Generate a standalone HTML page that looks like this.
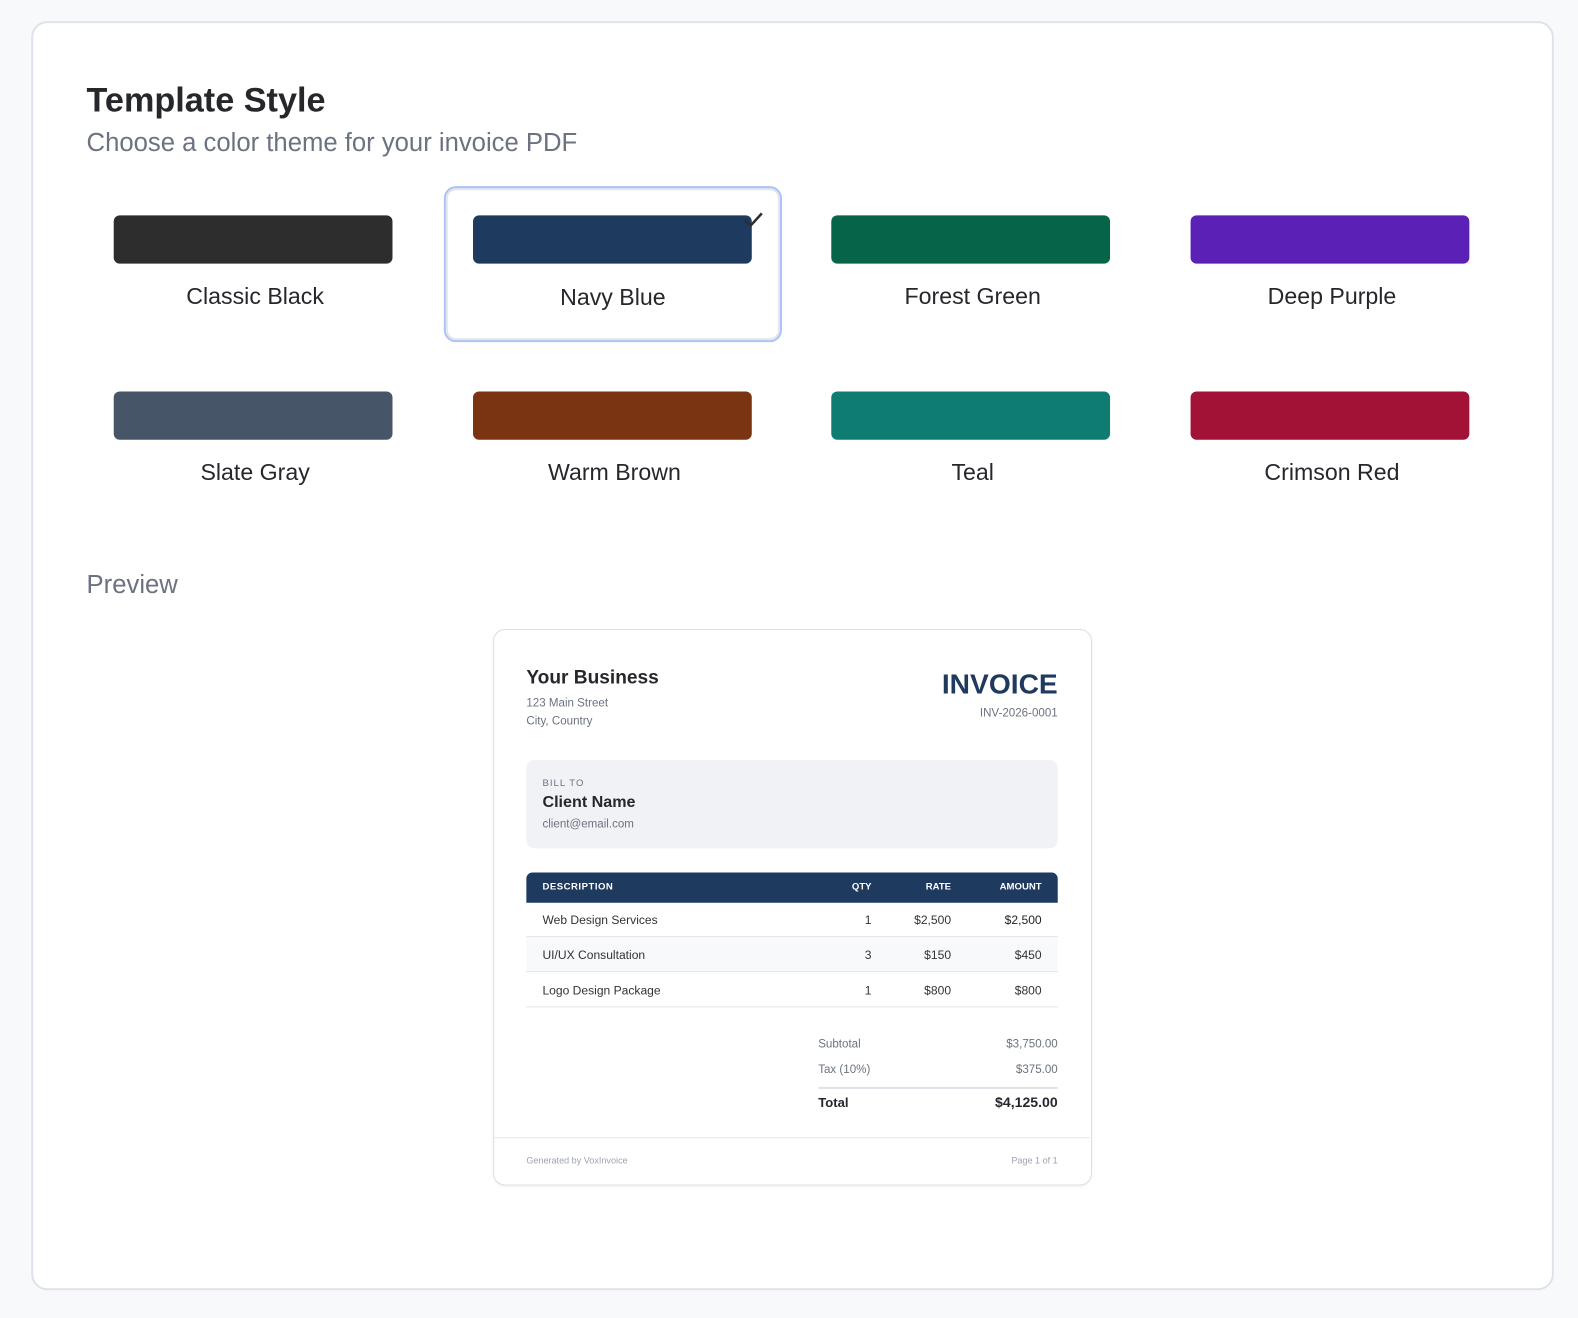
<!DOCTYPE html>
<html><head><meta charset="utf-8"><style>
*{box-sizing:border-box;margin:0;padding:0}
body{width:1578px;height:1318px;background:#f8f9fb;font-family:"Liberation Sans",sans-serif;color:#25272b;position:relative;overflow:hidden}
#w{position:absolute;left:0;top:0;width:1578px;height:1310px;transform:scale(1.0064);transform-origin:0 0}
.a{position:absolute}
.outer{left:31px;top:21px;width:1513px;height:1261px;background:#fff;border:2px solid #dfe2ea;border-radius:16px}
.card{position:absolute;width:335px;height:151px;border-radius:12px}
.sw{position:absolute;left:27px;top:27px;width:277px;height:48px;border-radius:6px}
.lbl{position:absolute;left:0;right:0;top:94px;text-align:center;font-size:23px;color:#25272b}
.sel{border:2px solid #a9c4f5;box-shadow:inset 0 0 0 2px #e4e6eb}
.inv{left:490px;top:625px;width:595px;height:553px;border:1.5px solid #dcdfe6;border-radius:12px;background:#fff;box-shadow:0 1px 3px rgba(0,0,0,.05)}
.t{font-size:12px;color:#333}
.r{text-align:right}
</style></head><body><div id="w">
<div class="a outer"></div>
<div class="a" style="left:86px;top:81px;font-size:34px;font-weight:bold;color:#25272b">Template Style</div>
<div class="a" style="left:86px;top:128px;font-size:25.5px;color:#6b7280">Choose a color theme for your invoice PDF</div>

<div class="card" style="left:86px;top:187px"><div class="sw" style="background:#2d2d2d"></div><div class="lbl">Classic Black</div></div>
<div class="card sel" style="left:441px;top:185px;width:336px;height:155px"><div class="sw" style="left:27px;top:27px;background:#1f3a5f"></div><div class="lbl" style="top:95px">Navy Blue</div>
<svg class="a" style="left:294px;top:22px" width="24" height="18" viewBox="0 0 24 18"><path d="M3 10 L9 15 L20 3" fill="none" stroke="#2b2d30" stroke-width="2.5"/></svg></div>
<div class="card" style="left:799px;top:187px"><div class="sw" style="background:#066449"></div><div class="lbl">Forest Green</div></div>
<div class="card" style="left:1156px;top:187px"><div class="sw" style="background:#5b21b6"></div><div class="lbl">Deep Purple</div></div>

<div class="card" style="left:86px;top:362px"><div class="sw" style="background:#475569"></div><div class="lbl">Slate Gray</div></div>
<div class="card" style="left:443px;top:362px"><div class="sw" style="background:#7b3412"></div><div class="lbl">Warm Brown</div></div>
<div class="card" style="left:799px;top:362px"><div class="sw" style="background:#0e7c71"></div><div class="lbl">Teal</div></div>
<div class="card" style="left:1156px;top:362px"><div class="sw" style="background:#a11236"></div><div class="lbl">Crimson Red</div></div>

<div class="a" style="left:86px;top:567px;font-size:25.5px;color:#6b7280">Preview</div>

<div class="a inv"></div>
<div class="a" style="left:523px;top:663px;font-size:19px;font-weight:bold;color:#25272b">Your Business</div>
<div class="a" style="left:523px;top:690px;font-size:11.5px;color:#6b7280;line-height:18px">123 Main Street<br>City, Country</div>
<div class="a r" style="right:527px;top:664px;font-size:28px;font-weight:bold;color:#1f3a5f">INVOICE</div>
<div class="a r" style="right:527px;top:703px;font-size:11.5px;color:#6b7280">INV-2026-0001</div>

<div class="a" style="left:523px;top:755px;width:528px;height:88px;background:#f1f2f5;border-radius:8px"></div>
<div class="a" style="left:539px;top:773px;font-size:9.5px;color:#6b7280;letter-spacing:1px">BILL TO</div>
<div class="a" style="left:539px;top:789px;font-size:16px;font-weight:bold;color:#25272b">Client Name</div>
<div class="a" style="left:539px;top:813px;font-size:11.5px;color:#6b7280">client@email.com</div>

<div class="a" style="left:523px;top:867px;width:528px;height:30px;background:#1f3a5f;border-radius:6px 6px 0 0"></div>
<div class="a" style="left:539px;top:876px;font-size:9.5px;font-weight:bold;color:#fff;letter-spacing:.5px">DESCRIPTION</div>
<div class="a r" style="right:712px;top:876px;font-size:9.5px;font-weight:bold;color:#fff">QTY</div>
<div class="a r" style="right:633px;top:876px;font-size:9.5px;font-weight:bold;color:#fff">RATE</div>
<div class="a r" style="right:543px;top:876px;font-size:9.5px;font-weight:bold;color:#fff">AMOUNT</div>

<div class="a" style="left:523px;top:931px;width:528px;height:35px;background:#f8f9fb"></div>
<div class="a" style="left:523px;top:930px;width:528px;height:1px;background:#e2e4ea"></div>
<div class="a" style="left:523px;top:965px;width:528px;height:1px;background:#e2e4ea"></div>
<div class="a" style="left:523px;top:1000px;width:528px;height:1px;background:#e2e4ea"></div>

<div class="a t" style="left:539px;top:907px">Web Design Services</div>
<div class="a t r" style="right:712px;top:907px">1</div>
<div class="a t r" style="right:633px;top:907px">$2,500</div>
<div class="a t r" style="right:543px;top:907px;color:#222">$2,500</div>
<div class="a t" style="left:539px;top:942px">UI/UX Consultation</div>
<div class="a t r" style="right:712px;top:942px">3</div>
<div class="a t r" style="right:633px;top:942px">$150</div>
<div class="a t r" style="right:543px;top:942px">$450</div>
<div class="a t" style="left:539px;top:977px">Logo Design Package</div>
<div class="a t r" style="right:712px;top:977px">1</div>
<div class="a t r" style="right:633px;top:977px">$800</div>
<div class="a t r" style="right:543px;top:977px">$800</div>

<div class="a" style="left:813px;top:1032px;font-size:11.5px;color:#6b7280">Subtotal</div>
<div class="a r" style="right:527px;top:1032px;font-size:11.5px;color:#6b7280">$3,750.00</div>
<div class="a" style="left:813px;top:1057px;font-size:11.5px;color:#6b7280">Tax (10%)</div>
<div class="a r" style="right:527px;top:1057px;font-size:11.5px;color:#6b7280">$375.00</div>
<div class="a" style="left:813px;top:1080px;width:238px;height:2px;background:#dfe2e8"></div>
<div class="a" style="left:813px;top:1088px;font-size:13px;font-weight:bold;color:#25272b">Total</div>
<div class="a r" style="right:527px;top:1087px;font-size:14px;font-weight:bold;color:#25272b">$4,125.00</div>

<div class="a" style="left:491px;top:1130px;width:592px;height:1px;background:#e4e6eb"></div>
<div class="a" style="left:523px;top:1148px;font-size:9px;color:#9ca3af">Generated by VoxInvoice</div>
<div class="a r" style="right:527px;top:1148px;font-size:9px;color:#9ca3af">Page 1 of 1</div>
</div></body></html>
